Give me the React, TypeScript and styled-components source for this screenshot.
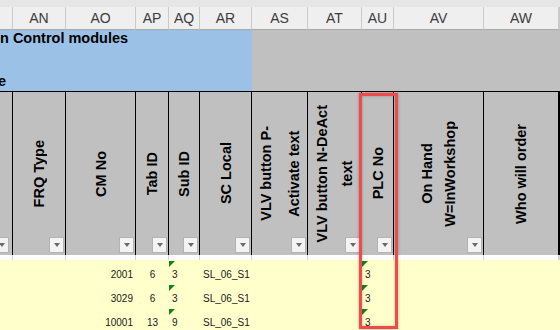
import React from "react";
import styled, { createGlobalStyle } from "styled-components";

const Global = createGlobalStyle`
  html, body { margin: 0; padding: 0; background: #ffffff; }
  body { font-family: "Liberation Sans", Arial, sans-serif; }
`;

const COLS = "13px 53px 70px 33px 31px 52px 56px 54px 32px 90px 75px 1fr";

const Sheet = styled.div`
  position: relative;
  width: 560px;
  height: 330px;
  overflow: hidden;
  background: #ffffff;
  font-family: "Liberation Sans", Arial, sans-serif;
`;

const TopStrip = styled.div`
  height: 7px;
  background: #e6e6e6;
`;

const Row = styled.div<{ $h: number; $bg?: string }>`
  display: grid;
  grid-template-columns: ${COLS};
  height: ${(p) => p.$h}px;
  background: ${(p) => p.$bg || "transparent"};
`;

const LetterCell = styled.div`
  box-sizing: border-box;
  background: #efefef;
  border-right: 1px solid #cacaca;
  border-bottom: 1px solid #a9a9a9;
  display: flex;
  align-items: center;
  justify-content: center;
  font-size: 14px;
  color: #3c3c3c;
  overflow: hidden;
`;

const BlueBanner = styled.div`
  grid-column: 1 / 7;
  box-sizing: border-box;
  background: #9bc2e6;
  border-bottom: 1px solid #000;
  overflow: hidden;
`;

const GrayBanner = styled.div`
  grid-column: 7 / -1;
  box-sizing: border-box;
  background: #c0c0c0;
  border-bottom: 1px solid #000;
`;

const TitleText = styled.div`
  margin-top: -2px;
  font-size: 14.5px;
  font-weight: bold;
  line-height: 21.5px;
  color: #000;
  white-space: nowrap;
`;

const TitleLine = styled.div<{ $shift?: number }>`
  height: 21.5px;
  margin-left: ${(p) => p.$shift || 0}px;
`;

const HeadCell = styled.div`
  position: relative;
  box-sizing: border-box;
  background: #c0c0c0;
  border-right: 1px solid #000;
  display: flex;
  align-items: center;
  justify-content: center;
  overflow: hidden;
`;

const VLabel = styled.div<{ $lh: number }>`
  writing-mode: vertical-rl;
  transform: rotate(180deg);
  text-align: center;
  white-space: nowrap;
  font-size: 14.5px;
  font-weight: bold;
  line-height: ${(p) => p.$lh}px;
  color: #000;
`;

const FilterButton = styled.div<{ $inset: number }>`
  position: absolute;
  right: ${(p) => p.$inset}px;
  bottom: 2px;
  width: 15px;
  height: 16px;
  box-sizing: border-box;
  background: #f3f3f3;
  border: 1px solid #b3b3b3;
  display: flex;
  align-items: center;
  justify-content: center;
  &::after {
    content: "";
    width: 0;
    height: 0;
    border-left: 3.5px solid transparent;
    border-right: 3.5px solid transparent;
    border-top: 4px solid #6a6a6a;
  }
`;

const GapCell = styled.div`
  box-sizing: border-box;
  border-right: 1px solid #d6d6d6;
`;

const DataCell = styled.div<{ $align: "left" | "right" | "center" }>`
  position: relative;
  box-sizing: border-box;
  display: flex;
  align-items: flex-end;
  justify-content: ${(p) =>
    p.$align === "right" ? "flex-end" : p.$align === "center" ? "center" : "flex-start"};
  padding: 0 3px 3px 3px;
  font-size: 10px;
  line-height: 12px;
  color: #1a1a1a;
  white-space: nowrap;
`;

const Flag = styled.span`
  position: absolute;
  top: 1px;
  left: 0;
  width: 0;
  height: 0;
  border-top: 6px solid #1b7d1b;
  border-right: 6px solid transparent;
`;

const Highlight = styled.div`
  position: absolute;
  left: 359px;
  top: 93px;
  width: 39px;
  height: 236px;
  box-sizing: border-box;
  border: 3px solid #f24a4a;
  box-shadow: 0 0 3px rgba(0, 0, 0, 0.3), inset 0 0 3px rgba(0, 0, 0, 0.25);
  pointer-events: none;
`;

type Col = {
  letter: string;
  label?: string[];
  lh?: number;
  filter: boolean;
  inset?: number;
  align: "left" | "right" | "center";
};

const columns: Col[] = [
  { letter: "", filter: true, inset: 3, align: "left" },
  { letter: "AN", label: ["FRQ Type"], filter: true, align: "left" },
  { letter: "AO", label: ["CM No"], filter: true, align: "right" },
  { letter: "AP", label: ["Tab ID"], filter: true, align: "center" },
  { letter: "AQ", label: ["Sub ID"], filter: true, align: "left" },
  { letter: "AR", label: ["SC Local"], filter: true, align: "left" },
  { letter: "AS", label: ["VLV button P-", "Activate text"], lh: 28, filter: true, align: "left" },
  { letter: "AT", label: ["VLV button N-DeAct", "text"], lh: 25, filter: true, align: "left" },
  { letter: "AU", label: ["PLC No"], filter: true, align: "left" },
  { letter: "AV", label: ["On Hand", "W=InWorkshop"], lh: 23, filter: true, align: "left" },
  { letter: "AW", label: ["Who will order"], filter: false, align: "left" },
  { letter: "", filter: false, align: "left" },
];

type Cell = { text: string; flag?: boolean } | null;

const rows: Cell[][] = [
  [null, null, { text: "2001" }, { text: "6" }, { text: "3", flag: true }, { text: "SL_06_S1" }, null, null, { text: "3", flag: true }, null, null, null],
  [null, null, { text: "3029" }, { text: "6" }, { text: "3", flag: true }, { text: "SL_06_S1" }, null, null, { text: "3", flag: true }, null, null, null],
  [null, null, { text: "10001" }, { text: "13" }, { text: "9", flag: true }, { text: "SL_06_S1" }, null, null, { text: "3", flag: true }, null, null, null],
];

export default function App() {
  return (
    <>
      <Global />
      <Sheet>
        <TopStrip />
        <Row $h={23}>
          {columns.map((c, i) => (
            <LetterCell key={i}>{c.letter}</LetterCell>
          ))}
        </Row>
        <Row $h={62}>
          <BlueBanner>
            <TitleText>
              <TitleLine>n Control modules</TitleLine>
              <TitleLine />
              <TitleLine $shift={-2}>e</TitleLine>
            </TitleText>
          </BlueBanner>
          <GrayBanner />
        </Row>
        <Row $h={163}>
          {columns.map((c, i) => (
            <HeadCell key={i}>
              {c.label && (
                <VLabel $lh={c.lh || 18}>
                  {c.label.map((l, j) => (
                    <React.Fragment key={j}>
                      {j > 0 && <br />}
                      {l}
                    </React.Fragment>
                  ))}
                </VLabel>
              )}
              {c.filter && <FilterButton $inset={c.inset ?? 1} />}
            </HeadCell>
          ))}
        </Row>
        <Row $h={5}>
          {columns.map((_, i) => (
            <GapCell key={i} />
          ))}
        </Row>
        {rows.map((r, ri) => (
          <Row key={ri} $h={24} $bg="#ffffcc">
            {r.map((cell, ci) => (
              <DataCell key={ci} $align={columns[ci].align}>
                {cell?.flag && <Flag />}
                {cell?.text}
              </DataCell>
            ))}
          </Row>
        ))}
        <Highlight />
      </Sheet>
    </>
  );
}
